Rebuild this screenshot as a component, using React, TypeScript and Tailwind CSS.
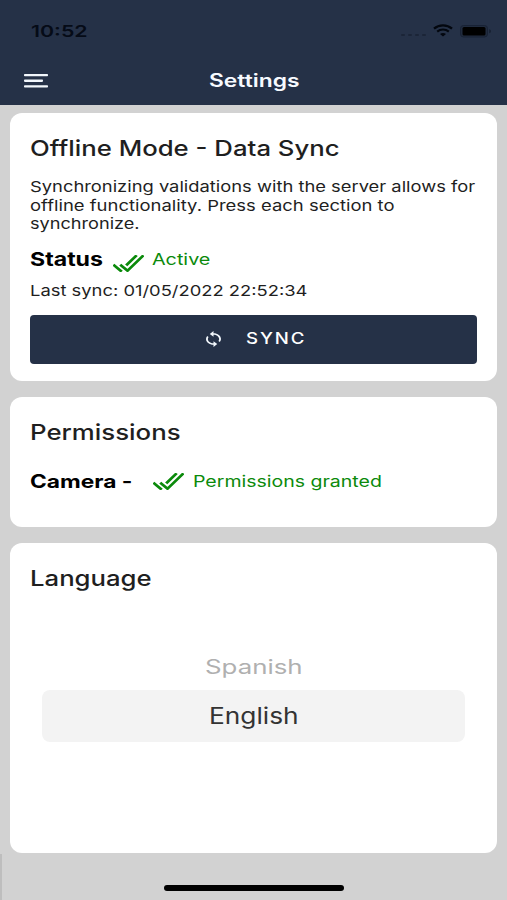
import { useLayoutEffect, useRef, useState } from "react";

type FitProps = { width: number; className?: string; children: string };

// Stretches a single line of text horizontally to fill the given width.
function Fit({ width, className = "", children }: FitProps) {
  const ref = useRef<HTMLSpanElement>(null);
  const [scale, setScale] = useState(1.2);
  useLayoutEffect(() => {
    if (ref.current) setScale(width / ref.current.offsetWidth);
  }, [width]);
  return (
    <span className={`block shrink-0 whitespace-nowrap ${className}`} style={{ width }}>
      <span ref={ref} className="inline-block origin-left align-top" style={{ transform: `scaleX(${scale})` }}>
        {children}
      </span>
    </span>
  );
}

function DoubleCheck({ className = "" }: { className?: string }) {
  return (
    <svg
      viewBox="25 105 462 302"
      preserveAspectRatio="none"
      className={`h-[17px] w-[31px] shrink-0 ${className}`}
      fill="none"
      stroke="#0b8a0b"
      strokeWidth="44"
      strokeLinecap="square"
    >
      <path d="M465 127 241 384l-92-92M140 385l-93-93M363 127 236 273" />
    </svg>
  );
}

export default function App() {
  return (
    <div className="flex h-[900px] w-[507px] flex-col overflow-hidden bg-[#d2d2d2] font-['Inter',sans-serif] text-[#1f1f1f]">
      <header className="h-[105px] bg-[#253147]">
        <div className="flex h-[56px] items-start pt-[20px] pr-[15px] pl-[31px]">
          <Fit width={56} className="text-[16px] leading-[22px] font-semibold text-[#050b17]">10:52</Fit>
          <div className="mt-[14px] ml-auto flex gap-[3px]">
            <i className="h-[2px] w-[4px] rounded-full bg-[#1b2537]" />
            <i className="h-[2px] w-[4px] rounded-full bg-[#1b2537]" />
            <i className="h-[2px] w-[4px] rounded-full bg-[#1b2537]" />
            <i className="h-[2px] w-[4px] rounded-full bg-[#1b2537]" />
          </div>
          <svg viewBox="0 0 20 13" preserveAspectRatio="none" className="mt-[4px] ml-[7px] h-[13px] w-[20px]" fill="none" stroke="#03070f">
            <path d="M1 4.6C6 .2 14 .2 19 4.6" strokeWidth="2.3" />
            <path d="M4.2 7.6c3.3-2.8 8.3-2.8 11.6 0" strokeWidth="2.1" />
            <path d="M10 12.4 7 9.9c1.700-1.300 4.300-1.300 6 0Z" fill="#03070f" stroke="none" />
          </svg>
          <svg viewBox="0 0 32 13" className="mt-[5px] ml-[7px] h-[13px] w-[32px]">
            <rect x=".5" y=".5" width="27" height="11.500" rx="3" fill="#202b3e" stroke="#182235" />
            <rect x="2.500" y="2" width="23" height="8.500" rx="1.500" fill="#000" />
            <path d="M29.300 4.200c2 .6 2 3.400 0 4Z" fill="#141d2d" />
          </svg>
        </div>
        <div className="grid h-[49px] grid-cols-[1fr_auto_1fr] items-start px-[24px]">
          <svg viewBox="0 0 24 14" className="mt-[18px] h-[14px] w-[24px]" fill="#f2f7fc">
            <rect y="0" width="24" height="2.300" rx=".8" />
            <rect y="5.600" width="19" height="2.300" rx=".8" />
            <rect y="11.200" width="24" height="2.300" rx=".8" />
          </svg>
          <Fit width={90} className="mt-[13px] text-[18px] leading-[24px] font-semibold text-[#f7faff]">Settings</Fit>
        </div>
      </header>

      <main className="flex flex-col gap-[16px] px-[10px] pt-[8px]">
        <section className="h-[268px] rounded-[12px] bg-white px-[20px] pt-[21px]">
          <Fit width={310} className="text-[21.5px] leading-[28px] font-medium">Offline Mode - Data Sync</Fit>
          <div className="mt-[16px] text-[15px] leading-[18.600px]">
            <Fit width={445}>Synchronizing validations with the server allows for</Fit>
            <Fit width={364}>offline functionality. Press each section to</Fit>
            <Fit width={110}>synchronize.</Fit>
          </div>
          <div className="mt-[14px] flex h-[24px]">
            <Fit width={73} className="text-[19px] leading-[24px] font-bold text-black">Status</Fit>
            <DoubleCheck className="mt-[7px] ml-[10px]" />
            <Fit width={58} className="ml-[8px] text-[16px] leading-[22px] text-[#0b8a0b]">Active</Fit>
          </div>
          <Fit width={278} className="mt-[9px] text-[15px] leading-[20px]">Last sync: 01/05/2022 22:52:34</Fit>
          <button className="mt-[14px] flex h-[49px] w-[447px] items-center rounded-[4px] bg-[#253147] pl-[176px] text-white">
            <svg viewBox="4 1 16 22" preserveAspectRatio="none" className="h-[16px] w-[15px]" fill="#f2f7fc">
              <path d="M12 4V1L8 5l4 4V6c3.310 0 6 2.690 6 6 0 1.010-.25 1.970-.7 2.800l1.460 1.460A7.930 7.930 0 0 0 20 12c0-4.420-3.580-8-8-8zm0 14c-3.310 0-6-2.690-6-6 0-1.010.25-1.970.7-2.800L5.240 7.740A7.930 7.930 0 0 0 4 12c0 4.420 3.580 8 8 8v3l4-4-4-4v3z" />
            </svg>
            <Fit width={60} className="ml-[20px] text-[15.500px] leading-[20px] font-medium tracking-[1.600px]">SYNC</Fit>
          </button>
        </section>

        <section className="h-[130px] rounded-[12px] bg-white px-[20px] pt-[21px]">
          <Fit width={150} className="text-[21.5px] leading-[28px] font-medium">Permissions</Fit>
          <div className="mt-[23px] flex h-[24px]">
            <Fit width={102} className="text-[18.500px] leading-[24px] font-bold text-black">Camera -</Fit>
            <DoubleCheck className="mt-[4px] ml-[21px]" />
            <Fit width={189} className="ml-[9px] text-[16px] leading-[24px] text-[#0b8a0b]">Permissions granted</Fit>
          </div>
        </section>

        <section className="h-[310px] rounded-[12px] bg-white px-[20px] pt-[21px]">
          <Fit width={122} className="text-[21.5px] leading-[28px] font-medium">Language</Fit>
          <div className="mt-[62px] flex flex-col items-center">
            <Fit width={98} className="text-[19.500px] leading-[26px] text-[#b0b0b0]">Spanish</Fit>
            <div className="mt-[10px] flex h-[52px] w-[423px] items-center justify-center rounded-[8px] bg-[#f3f3f3]">
              <Fit width={90} className="text-[22.500px] leading-[28px] text-[#333]">English</Fit>
            </div>
          </div>
        </section>
      </main>

      <footer className="mt-auto flex h-[47px] items-end">
        <div className="h-[46px] w-[2px] bg-[#bebebe]" />
        <div className="mb-[9px] ml-[162px] h-[6px] w-[180px] rounded-full bg-black" />
      </footer>
    </div>
  );
}
